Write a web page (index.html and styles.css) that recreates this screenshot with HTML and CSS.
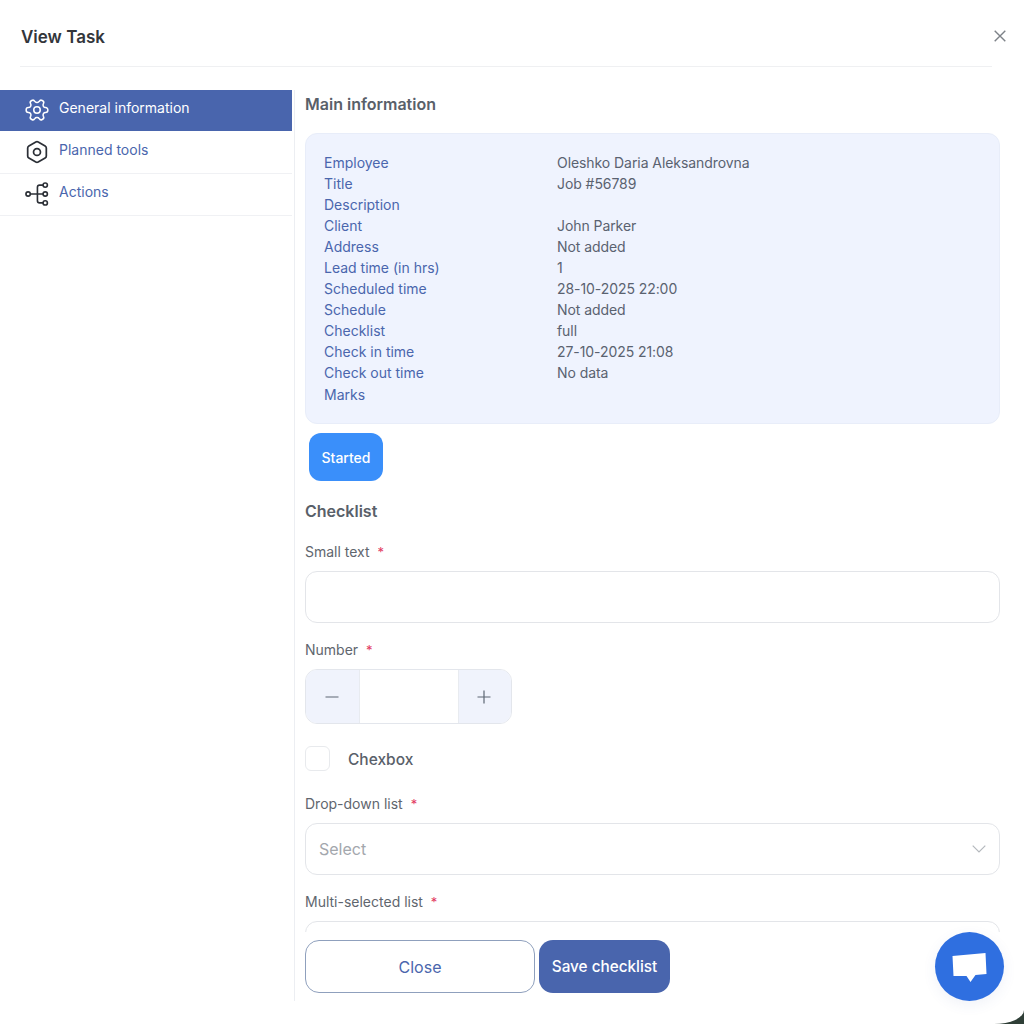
FILE: index.html
```html
<!DOCTYPE html>
<html lang="en">
<head>
<meta charset="utf-8">
<title>View Task</title>
<link rel="stylesheet" href="styles.css">
</head>
<body>
<div class="modal">
  <header class="modal-header">
    <h1 class="modal-title">View Task</h1>
    <button class="close-x" aria-label="Close">
      <svg width="12" height="12" viewBox="0 0 12 12"><path d="M.7.7l10.6 10.6M11.3.7L.7 11.3" stroke="#7d8288" stroke-width="1.4" fill="none"/></svg>
    </button>
  </header>
  <div class="modal-body">
    <nav class="sidebar">
      <a class="nav-item active">
        <svg class="nav-icon" width="26" height="26" viewBox="0 0 24 24" fill="none" stroke="#fff" stroke-width="1.4" stroke-linejoin="round" stroke-linecap="round"><path transform="rotate(90 12 12)" d="M12.22 2h-.44a2 2 0 0 0-2 2v.18a2 2 0 0 1-1 1.73l-.43.25a2 2 0 0 1-2 0l-.15-.08a2 2 0 0 0-2.730.73l-.22.38a2 2 0 0 0 .73 2.730l.15.1a2 2 0 0 1 1 1.720v.51a2 2 0 0 1-1 1.740l-.15.09a2 2 0 0 0-.73 2.730l.22.38a2 2 0 0 0 2.730.73l.15-.08a2 2 0 0 1 2 0l.43.25a2 2 0 0 1 1 1.730V20a2 2 0 0 0 2 2h.44a2 2 0 0 0 2-2v-.18a2 2 0 0 1 1-1.730l.43-.25a2 2 0 0 1 2 0l.15.08a2 2 0 0 0 2.730-.73l.22-.39a2 2 0 0 0-.73-2.730l-.15-.08a2 2 0 0 1-1-1.740v-.5a2 2 0 0 1 1-1.740l.15-.09a2 2 0 0 0 .73-2.730l-.22-.38a2 2 0 0 0-2.730-.73l-.15.08a2 2 0 0 1-2 0l-.43-.25a2 2 0 0 1-1-1.730V4a2 2 0 0 0-2-2z"/><circle cx="12" cy="12" r="3"/></svg>
        <span>General information</span>
      </a>
      <a class="nav-item">
        <svg class="nav-icon" width="26" height="26" viewBox="0 0 24 24" fill="none" stroke="#2b2f36" stroke-width="1.6" stroke-linejoin="round"><path d="M10.900 2.800a2.200 2.200 0 0 1 2.200 0l6.400 3.700a2.200 2.200 0 0 1 1.100 1.900v7.200a2.200 2.200 0 0 1-1.100 1.900l-6.400 3.700a2.200 2.200 0 0 1-2.200 0l-6.400-3.700a2.200 2.200 0 0 1-1.100-1.900V8.400a2.200 2.200 0 0 1 1.100-1.900z"/><circle cx="12" cy="12" r="3.200"/></svg>
        <span>Planned tools</span>
      </a>
      <a class="nav-item">
        <svg class="nav-icon" width="26" height="26" viewBox="0 0 24 24" fill="none" stroke="#2b2f36" stroke-width="1.5"><circle cx="3.800" cy="12" r="2"/><circle cx="19.600" cy="3.800" r="2"/><circle cx="19.600" cy="12" r="2"/><circle cx="19.600" cy="20.200" r="2"/><path d="M5.800 12h11.800M17.600 3.800h-3.200a2 2 0 0 0-2 2v12.400a2 2 0 0 0 2 2h3.200"/></svg>
        <span>Actions</span>
      </a>
    </nav>
    <main class="content">
      <div class="scroll">
        <h2 class="section-title">Main information</h2>
        <div class="info-card">
          <dl class="info-grid">
            <dt>Employee</dt><dd>Oleshko Daria Aleksandrovna</dd>
            <dt>Title</dt><dd>Job #56789</dd>
            <dt>Description</dt><dd></dd>
            <dt>Client</dt><dd>John Parker</dd>
            <dt>Address</dt><dd>Not added</dd>
            <dt>Lead time (in hrs)</dt><dd>1</dd>
            <dt>Scheduled time</dt><dd>28-10-2025 22:00</dd>
            <dt>Schedule</dt><dd>Not added</dd>
            <dt>Checklist</dt><dd>full</dd>
            <dt>Check in time</dt><dd>27-10-2025 21:08</dd>
            <dt>Check out time</dt><dd>No data</dd>
            <dt>Marks</dt><dd></dd>
          </dl>
        </div>
        <div class="status-badge">Started</div>
        <h2 class="section-title checklist-title">Checklist</h2>
        <label class="field-label label-small">Small text <span class="req">*</span></label>
        <div class="input"></div>
        <label class="field-label label-number">Number <span class="req">*</span></label>
        <div class="stepper">
          <span class="step">
            <svg width="14" height="14" viewBox="0 0 14 14"><path d="M.5 7h13" stroke="#5c6672" stroke-width="1.2"/></svg>
          </span>
          <span class="step-value"></span>
          <span class="step">
            <svg width="14" height="14" viewBox="0 0 14 14"><path d="M.5 7h13M7 .5v13" stroke="#5c6672" stroke-width="1.2"/></svg>
          </span>
        </div>
        <div class="check-row"><span class="checkbox"></span><span class="check-label">Chexbox</span></div>
        <label class="field-label label-drop">Drop-down list <span class="req">*</span></label>
        <div class="input select">
          <span class="placeholder">Select</span>
          <svg width="14" height="8" viewBox="0 0 14 8"><path d="M.7.7L7 7l6.3-6.3" stroke="#b4b8bd" stroke-width="1.2" fill="none"/></svg>
        </div>
        <label class="field-label label-multi">Multi-selected list <span class="req">*</span></label>
        <div class="input"></div>
      </div>
      <footer class="actions">
        <button class="btn btn-outline">Close</button>
        <button class="btn btn-primary">Save checklist</button>
      </footer>
    </main>
  </div>
  <button class="chat-fab" aria-label="Chat">
    <svg width="36" height="30" viewBox="0 0 36 30"><path d="M.5 3L33.500 0l1 21-11 1-5 7-4-6-13 0z" fill="#fff"/></svg>
  </button>
</div>
</body>
</html>
```
FILE: styles.css
```css
* { box-sizing: border-box; }
html, body { margin: 0; height: 100%; }
body { background: #2f3f37; font-family: Inter, "Liberation Sans", sans-serif; overflow: hidden; }
.modal { position: relative; width: 1024px; height: 1024px; background: #fff; border-bottom-right-radius: 30px 14px; padding: 0 24px 0 0; display: flex; flex-direction: column; }
.modal-header { margin-left: 20px; margin-right: 8px; height: 67px; border-bottom: 1.5px solid #eff0f2; display: flex; align-items: center; justify-content: space-between; padding-bottom: 1px; }
.modal-title { margin: 8px 0 0 1px; font-size: 17px; line-height: 24px; font-weight: 600; color: #33363b; }
.close-x { border: 0; background: none; padding: 0; margin-right: -14px; margin-top: 6px; display: flex; }
.modal-body { display: flex; margin-top: 23px; height: 911px; }
.sidebar { width: 295px; flex: none; border-right: 1px solid #eceef2; }
.nav-item { display: flex; align-items: center; gap: 9px; width: 292px; height: 42px; padding: 0 0 2px 24px; border-bottom: 1px solid #f0f1f4; color: #4a66ad; font-size: 14px; }
.nav-item span { margin-bottom: 4px; }
.nav-item.active { height: 41px; background: #4965ad; color: #fff; border-bottom: 0; margin-bottom: 1px; }
.nav-icon { flex: none; }
.content { flex: 1; margin-left: 10px; min-width: 0; display: flex; flex-direction: column; position: relative; }
.scroll { height: 842px; overflow: hidden; flex: none; }
.section-title { margin: 0; font-size: 16px; line-height: 28px; font-weight: 600; color: #596069; }
.info-card { margin-top: 15px; height: 291px; background: #eff3fe; border: 1px solid #e8edf9; border-radius: 12px; padding: 18px 18px; }
.info-grid { margin: 0; display: grid; grid-template-columns: 233px 1fr; grid-auto-rows: 21.05px; font-size: 14px; line-height: 21.05px; }
.info-grid dt { color: #4a66ad; }
.info-grid dd { margin: 0; color: #5a6270; letter-spacing: -.07px; }
.status-badge { margin: 9px 0 0 4px; width: 74px; height: 48px; border-radius: 12px; background: #3a8ffa; color: #fff; font-size: 14px; font-weight: 500; display: flex; align-items: center; justify-content: center; }
.checklist-title { margin-top: 16px; }
.field-label { display: block; font-size: 14px; line-height: 20px; color: #5f666e; }
.req { color: #e2395f; margin-left: 4px; font-size: 13px; }
.label-small { margin-top: 17px; }
.label-number { margin-top: 17px; }
.label-drop { margin-top: 23px; }
.label-multi { margin-top: 17px; }
.input { margin-top: 9px; height: 52px; border: 1px solid #e3e5e9; border-radius: 12px; background: #fff; }
.select { display: flex; align-items: center; justify-content: space-between; padding: 0 13px; }
.placeholder { font-size: 16px; color: #a3a7ad; }
.stepper { margin-top: 9px; width: 207px; height: 55px; border: 1px solid #e3e6ec; border-radius: 12px; overflow: hidden; display: flex; }
.step { width: 52.5px; flex: none; padding-right: 1px; background: #f0f3fc; display: flex; align-items: center; justify-content: center; }
.step-value { flex: 1; background: #fff; border-left: 1px solid #e8ebf0; border-right: 1px solid #e8ebf0; }
.check-row { margin-top: 22px; height: 25px; display: flex; align-items: center; gap: 18px; }
.checkbox { width: 25px; height: 25px; border: 1px solid #e8eaed; border-radius: 6px; background: #fff; }
.check-label { padding-top: 1px; font-size: 15.5px; font-weight: 500; color: #596069; }
.actions { display: flex; gap: 4px; margin-top: 8px; }
.btn { height: 53px; border-radius: 14px; font-family: inherit; font-size: 16px; font-weight: 500; }
.btn-outline { width: 230px; background: #fff; border: 1px solid #8fa0bd; color: #4a66ad; font-weight: 400; }
.btn-primary { width: 131px; background: #4965ad; border: 0; color: #fff; font-size: 15.3px; }
.chat-fab { position: absolute; left: 935px; top: 932px; width: 69px; height: 69px; border-radius: 50%; border: 0; background: #2f6fe0; box-shadow: 0 4px 14px rgba(60, 90, 160, .08); padding: 3px 0 0; display: flex; align-items: center; justify-content: center; }
```
